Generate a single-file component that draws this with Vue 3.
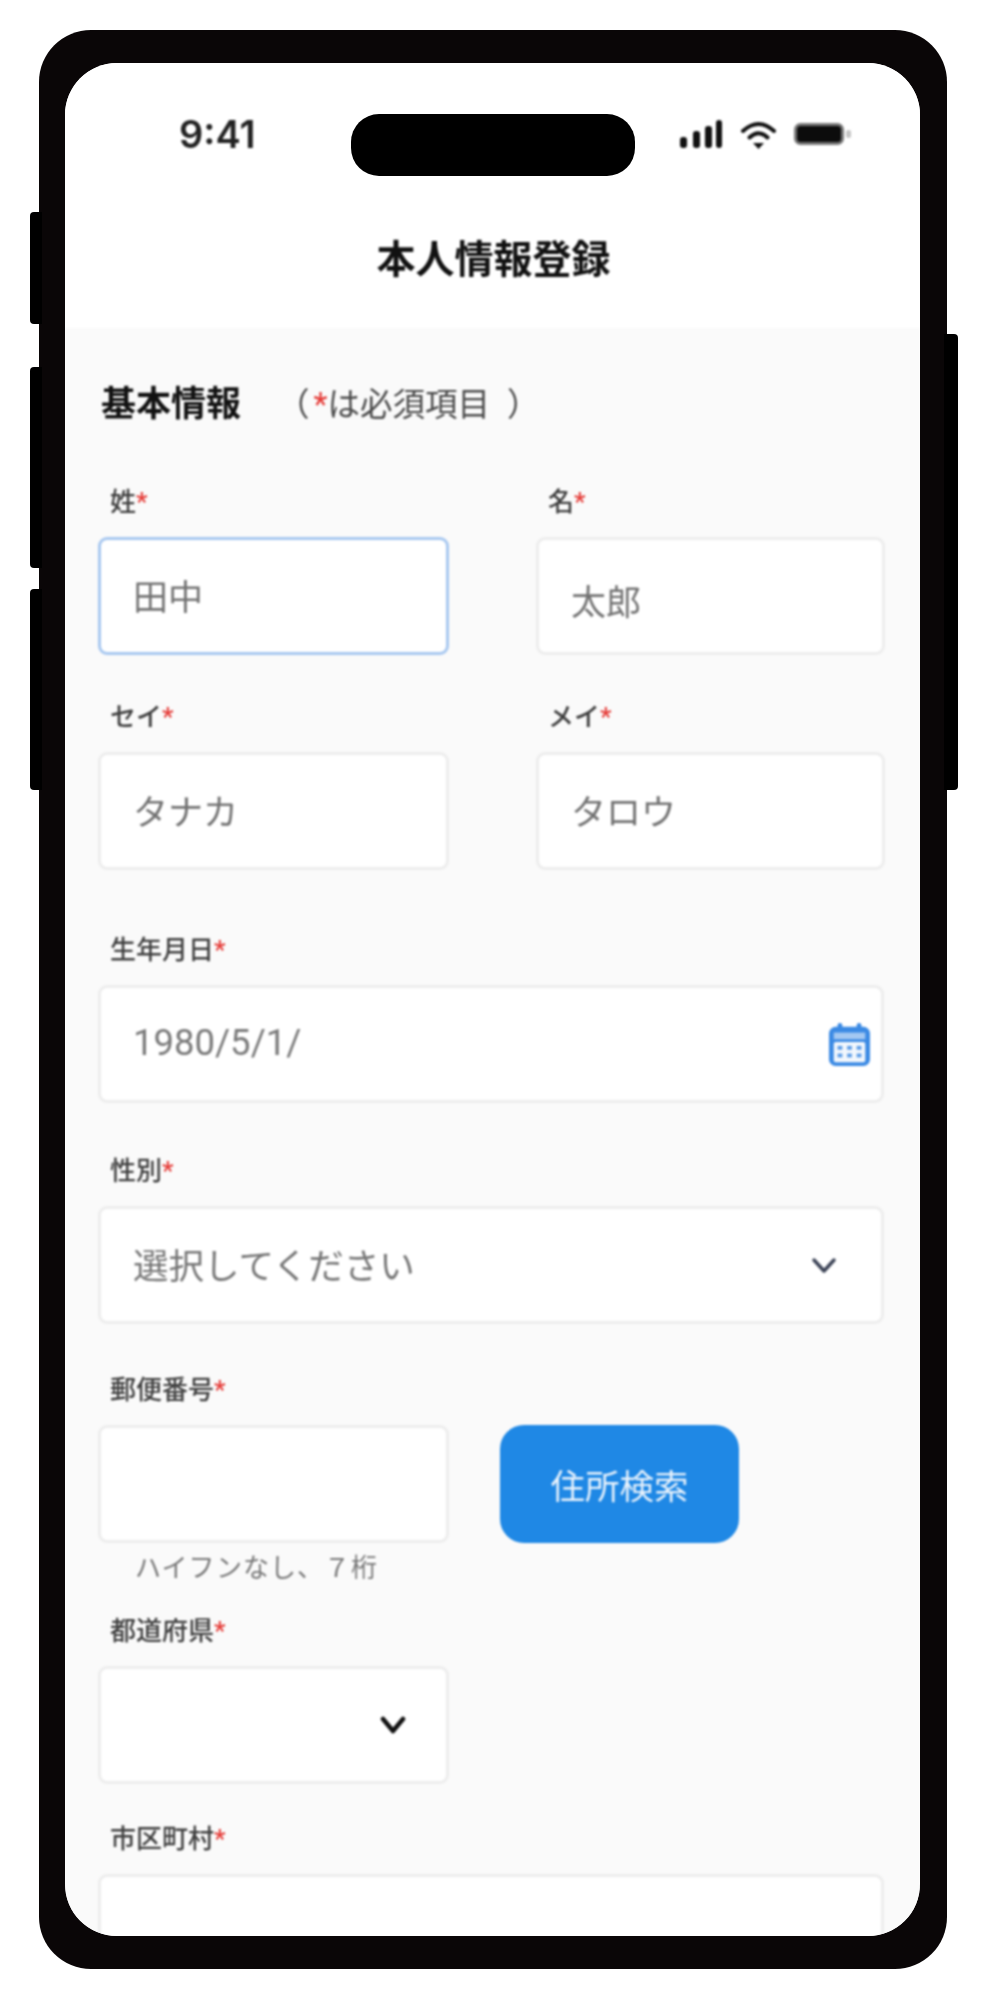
<template>
  <div class="page">
    <div class="phone">
      <span class="side side-mute"></span>
      <span class="side side-up"></span>
      <span class="side side-down"></span>
      <span class="side side-power"></span>

      <div class="screen">
        <div class="island"></div>

        <header class="head">
          <div class="status">
            <span class="time">9:41</span>
            <div class="status-icons">
              <svg width="44" height="29" viewBox="0 0 44 29">
                <rect x="1" y="17" width="7" height="11" rx="3" fill="#111" />
                <rect x="14" y="11" width="7" height="17" rx="3" fill="#111" />
                <rect x="26" y="6" width="7" height="22" rx="3" fill="#111" />
                <rect x="37" y="0" width="6" height="28" rx="3" fill="#111" />
              </svg>
              <svg width="37" height="29" viewBox="0 0 37 29">
                <path d="M3 11Q18.500 -3 34 11" fill="none" stroke="#111" stroke-width="4" stroke-linecap="round" />
                <path d="M9.500 17.500Q18.500 9 27.500 17.500" fill="none" stroke="#111" stroke-width="4" stroke-linecap="round" />
                <path d="M13 23L24 23L18.500 29Z" fill="#111" />
              </svg>
              <svg width="58" height="22" viewBox="0 0 58 22">
                <rect x="1.500" y="1.500" width="47" height="19" rx="5" fill="#0c0c0c" stroke="#777" stroke-width="3" />
                <rect x="52" y="7" width="5" height="8" rx="2" fill="#c4c4c4" />
              </svg>
            </div>
          </div>
          <h1 class="title">本人情報登録</h1>
        </header>

        <main class="form">
          <div class="section">
            <h2 class="section-title">基本情報</h2>
            <span class="section-note"><span class="paren-open">（</span><i class="req">*</i>は必須項目<span class="paren-close">）</span></span>
          </div>

          <div class="grid2 gap-first">
            <div>
              <div class="label">姓<i class="req">*</i></div>
              <div class="box box-focus">田中</div>
            </div>
            <div>
              <div class="label">名<i class="req">*</i></div>
              <div class="box box-low">太郎</div>
            </div>
          </div>

          <div class="grid2 gap-kana">
            <div>
              <div class="label">セイ<i class="req">*</i></div>
              <div class="box">タナカ</div>
            </div>
            <div>
              <div class="label">メイ<i class="req">*</i></div>
              <div class="box">タロウ</div>
            </div>
          </div>

          <div class="gap-birth">
            <div class="label">生年月日<i class="req">*</i></div>
            <div class="box box-date">
              <span class="date">1980/5/1/</span>
              <svg width="41" height="43" viewBox="0 0 43 45">
                <rect x="9" y="0" width="5" height="9" rx="2.500" fill="#3b8ae4" />
                <rect x="29" y="0" width="5" height="9" rx="2.500" fill="#3b8ae4" />
                <rect x="0" y="4" width="43" height="41" rx="7" fill="#3b8ae4" />
                <rect x="5" y="10" width="33" height="7" fill="#a3c8f2" />
                <rect x="5" y="20" width="33" height="21" rx="2" fill="#f2f7fd" />
                <g fill="#5c9de8">
                  <rect x="9" y="24" width="5" height="4" />
                  <rect x="19" y="24" width="5" height="4" />
                  <rect x="29" y="24" width="5" height="4" />
                  <rect x="9" y="32" width="5" height="4" />
                  <rect x="19" y="32" width="5" height="4" />
                  <rect x="29" y="32" width="5" height="4" />
                </g>
              </svg>
            </div>
          </div>

          <div class="gap-gender">
            <div class="label">性別<i class="req">*</i></div>
            <div class="box box-select">
              <span class="placeholder">選択してください</span>
              <svg width="26" height="17" viewBox="0 0 26 17">
                <path d="M3 3L13 14L23 3" fill="none" stroke="#3c4356" stroke-width="3.500" stroke-linecap="round" stroke-linejoin="round" />
              </svg>
            </div>
          </div>

          <div class="gap-postal">
            <div class="label">郵便番号<i class="req">*</i></div>
            <div class="postal-row">
              <div class="box"></div>
              <button class="search" type="button">住所検索</button>
            </div>
            <div class="hint">ハイフンなし、７桁</div>
          </div>

          <div class="half gap-pref">
            <div class="label">都道府県<i class="req">*</i></div>
            <div class="box box-pref">
              <svg width="26" height="18" viewBox="0 0 26 18">
                <path d="M3 3L13 15L23 3" fill="none" stroke="#111" stroke-width="4.500" stroke-linecap="round" stroke-linejoin="round" />
              </svg>
            </div>
          </div>

          <div class="gap-city">
            <div class="label">市区町村<i class="req">*</i></div>
            <div class="box"></div>
          </div>
        </main>
      </div>
    </div>
  </div>
</template>

<script setup>
</script>

<style>
html, body {
  margin: 0;
  background: #fff;
}
</style>

<style scoped>
.page {
  width: 989px;
  height: 2000px;
  box-sizing: border-box;
  padding: 30px 0 0 39px;
  background: #fff;
  font-family: Roboto, "Noto Sans CJK JP", sans-serif;
}

.phone {
  position: relative;
  width: 908px;
  height: 1939px;
  box-sizing: border-box;
  padding: 33px 27px 33px 26px;
  border-radius: 52px;
  background: #0a0607;
}

/* hardware buttons stick out of the frame */
.side {
  position: absolute;
  width: 12px;
  background: #000;
}
.side-mute { left: -9px; top: 182px; height: 112px; border-radius: 4px 0 0 4px; }
.side-up { left: -9px; top: 337px; height: 201px; border-radius: 4px 0 0 4px; }
.side-down { left: -9px; top: 559px; height: 201px; border-radius: 4px 0 0 4px; }
.side-power { right: -11px; top: 304px; height: 456px; width: 14px; border-radius: 0 4px 4px 0; }

.screen {
  position: relative;
  height: 100%;
  overflow: hidden;
  border-radius: 52px;
  background: #fff;
}

.island {
  position: absolute;
  left: 286px;
  top: 51px;
  width: 284px;
  height: 62px;
  border-radius: 28px;
  background: #000;
  z-index: 2;
}

.head {
  height: 265px;
  box-sizing: border-box;
  padding-top: 50px;
  background: #fff;
}

.status {
  display: flex;
  align-items: center;
  justify-content: space-between;
  height: 42px;
  padding: 0 68px 0 114px;
}

.time {
  font: 600 38px/42px Inter, sans-serif;
  color: #222;
  filter: blur(1px);
}

.status-icons {
  display: flex;
  align-items: center;
  gap: 17px;
  filter: blur(1px);
}

.title {
  margin: 81px 0 0;
  padding-left: 2px;
  text-align: center;
  font-size: 39px;
  line-height: 48px;
  font-weight: 700;
  color: #111;
  filter: blur(1.100px);
}

.form {
  height: 1700px;
  box-sizing: border-box;
  padding: 55px 36px 0 33px;
  background: #fafafa;
  filter: blur(1.100px);
}

.section {
  display: flex;
  align-items: center;
  height: 44px;
}
.section-title {
  margin: 0 0 0 3px;
  font-size: 35px;
  line-height: 44px;
  font-weight: 700;
  color: #111;
}
.section-note {
  margin-left: 40px;
  font-size: 32.500px;
  line-height: 44px;
  color: #4a4a4a;
}
.paren-open { margin: 0 4px 0 -4px; }
.paren-close { margin-left: 17px; }

.req {
  font-style: normal;
  color: #e53935;
}

.label {
  height: 30px;
  margin-bottom: 20px;
  padding-left: 12px;
  font-size: 26px;
  line-height: 30px;
  font-weight: 500;
  color: #3e3e3e;
}

.box {
  display: flex;
  align-items: center;
  height: 118px;
  box-sizing: border-box;
  padding: 0 0 4px 32px;
  border: 3px solid #ededed;
  border-radius: 9px;
  background: #fff;
  font-size: 35px;
  color: #727272;
}
.box svg { margin-top: 4px; }
.box-focus { border-color: #a8c8f0; }
.box-low { padding: 6px 0 0 32px; }
.box-date { justify-content: space-between; padding-right: 11px; }
.box-select { justify-content: space-between; padding-right: 44px; }
.box-pref { justify-content: flex-end; padding-right: 40px; }

.date { font-size: 36.500px; color: #7a7a7a; }
.placeholder { font-size: 35.500px; color: #767676; }

.grid2 {
  display: grid;
  grid-template-columns: 351px 349px;
  column-gap: 87px;
}

.half { width: 351px; }

.postal-row {
  display: grid;
  grid-template-columns: 351px 239px;
  column-gap: 51px;
}

.search {
  height: 118px;
  border: 0;
  border-radius: 24px;
  background: #1f88e5;
  color: #e8f2fc;
  font: 400 34.500px "Noto Sans CJK JP", sans-serif;
}

.hint {
  margin-top: 8px;
  padding-left: 37px;
  font-size: 26px;
  line-height: 34px;
  letter-spacing: 1px;
  color: #777;
}

.gap-first { margin-top: 60px; }
.gap-kana { margin-top: 47px; }
.gap-birth { margin-top: 65px; }
.gap-gender { margin-top: 53px; }
.gap-postal { margin-top: 51px; }
.gap-pref { margin-top: 31px; }
.gap-city { margin-top: 40px; }
</style>
